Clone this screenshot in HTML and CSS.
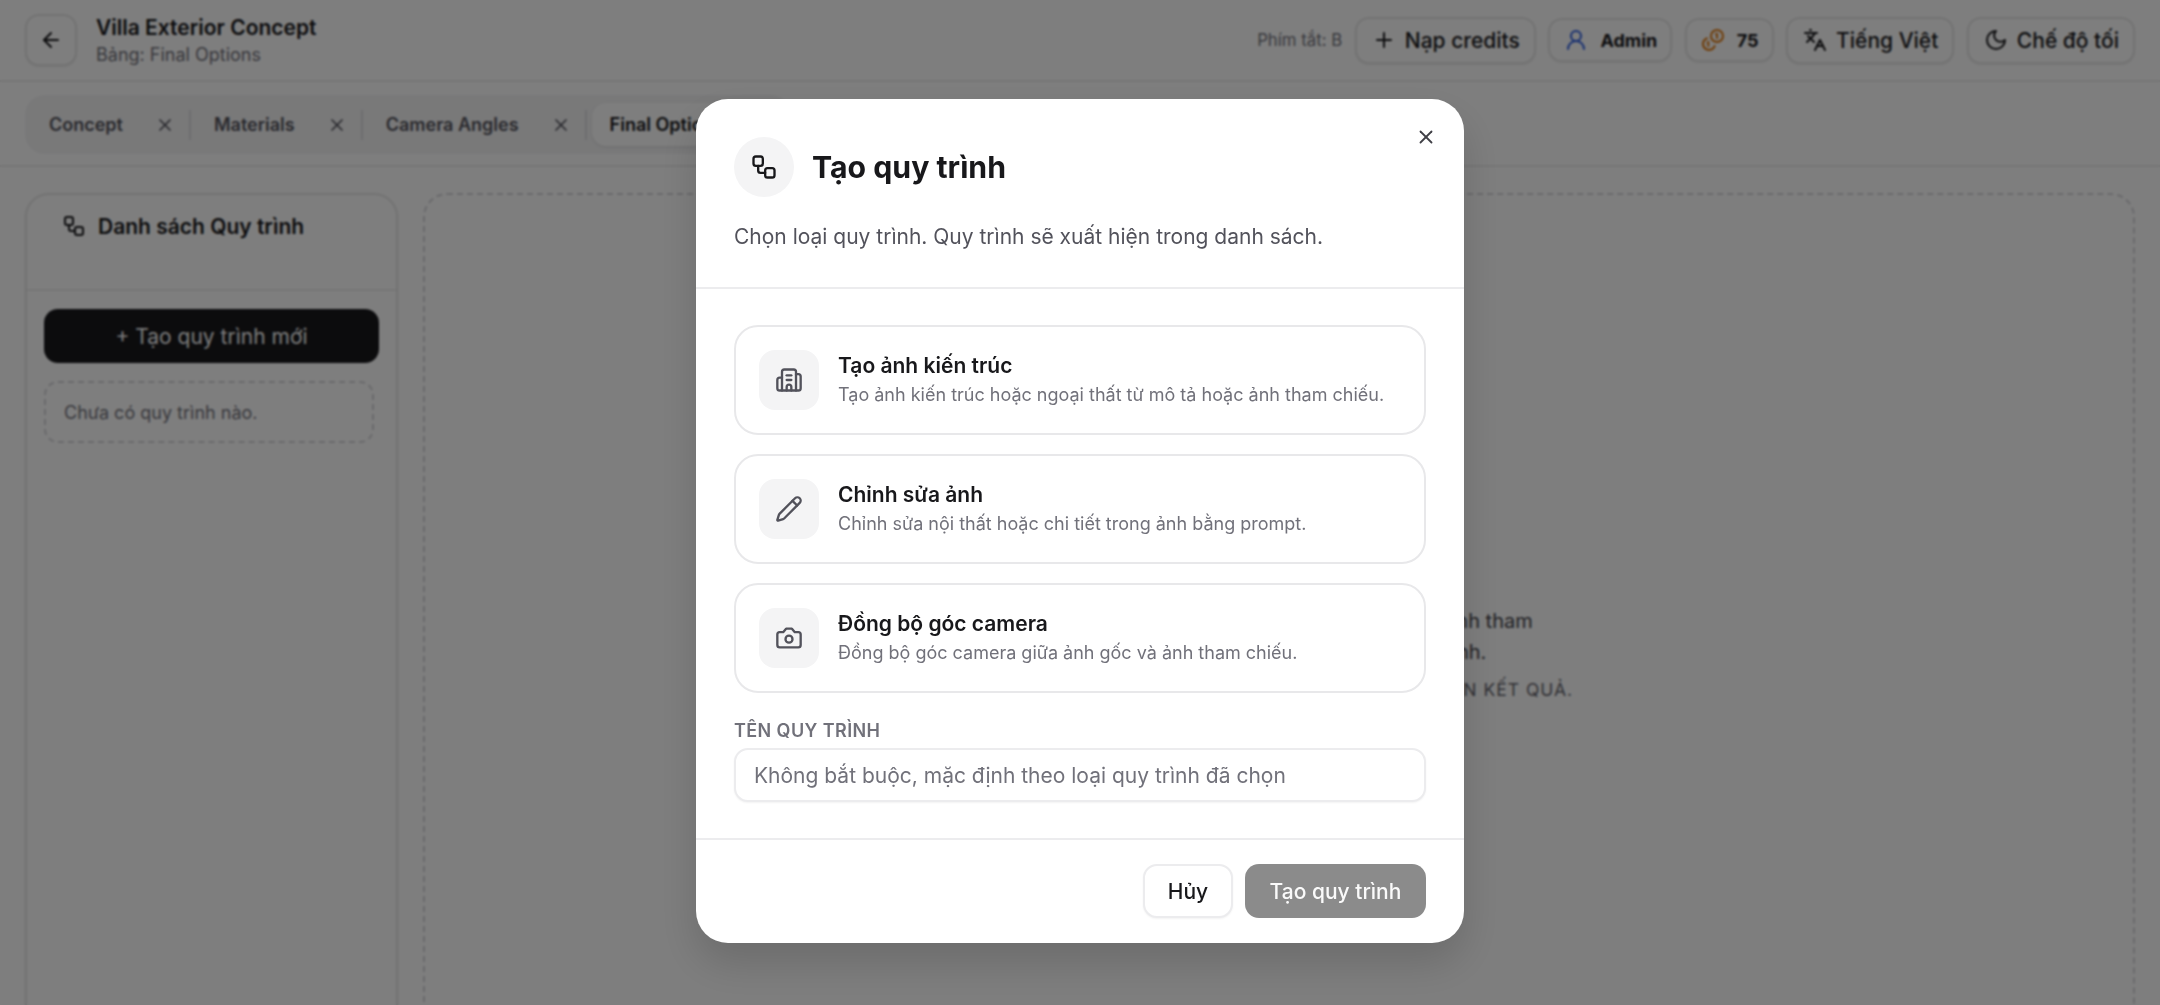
FILE: index.html
```html
<!DOCTYPE html>
<html lang="vi">
  <head>
    <meta charset="UTF-8" />
    <title>Villa Exterior Concept</title>
    <link rel="stylesheet" href="styles.css">
  </head>
  <body>
    <header class="topbar">
      <div class="topbar-left">
        <button class="back-btn">
          <svg class="icon" width="24" height="24" viewBox="0 0 24 24"><path d="m12 19-7-7 7-7"/><path d="M19 12H5"/></svg>
        </button>
        <div>
          <div class="project-name">Villa Exterior Concept</div>
          <div class="project-board">Bảng: Final Options</div>
        </div>
      </div>
      <div class="topbar-right">
        <span class="shortcut">Phím tắt: B</span>
        <button class="top-btn">
          <svg class="icon" width="24" height="24" viewBox="0 0 24 24"><path d="M5 12h14"/><path d="M12 5v14"/></svg>
          Nạp credits
        </button>
        <div class="top-pill">
          <svg class="icon icon-blue" width="24" height="24" viewBox="0 0 24 24"><circle cx="12" cy="8" r="5"/><path d="M20 21a8 8 0 0 0-16 0"/></svg>
          Admin
        </div>
        <div class="top-pill">
          <svg class="icon icon-orange" width="24" height="24" viewBox="0 0 24 24"><circle cx="16" cy="8" r="6"/><path d="M5.91 10.37A6 6 0 1 0 13.66 18"/><path d="M15 6h1v4"/><path d="m6.6 14.6.7-.7v4"/></svg>
          75
        </div>
        <button class="top-btn">
          <svg class="icon" width="24" height="24" viewBox="0 0 24 24"><path d="m5 8 6 6"/><path d="m4 14 6-6 2-3"/><path d="M2 5h12"/><path d="M7 2h1"/><path d="m22 22-5-10-5 10"/><path d="M14 18h6"/></svg>
          Tiếng Việt
        </button>
        <button class="top-btn">
          <svg class="icon" width="24" height="24" viewBox="0 0 24 24"><path d="M12 3a6 6 0 0 0 9 9 9 9 0 1 1-9-9Z"/></svg>
          Chế độ tối
        </button>
      </div>
    </header>

    <div class="tabs-row">
      <div class="tabs">
        <div class="tab">Concept <svg class="icon tab-x" width="20" height="20" viewBox="0 0 24 24"><path d="M18 6 6 18"/><path d="m6 6 12 12"/></svg></div>
        <span class="tab-sep"></span>
        <div class="tab">Materials <svg class="icon tab-x" width="20" height="20" viewBox="0 0 24 24"><path d="M18 6 6 18"/><path d="m6 6 12 12"/></svg></div>
        <span class="tab-sep"></span>
        <div class="tab">Camera Angles <svg class="icon tab-x" width="20" height="20" viewBox="0 0 24 24"><path d="M18 6 6 18"/><path d="m6 6 12 12"/></svg></div>
        <span class="tab-sep"></span>
        <div class="tab tab-active">Final Options <svg class="icon tab-x" width="20" height="20" viewBox="0 0 24 24"><path d="M18 6 6 18"/><path d="m6 6 12 12"/></svg></div>
      </div>
    </div>

    <main class="workspace">
      <aside class="sidebar">
        <div class="sidebar-head">
          <svg class="icon" width="24" height="24" viewBox="0 0 24 24"><rect x="3" y="3" width="8" height="8" rx="2"/><path d="M7 11v4a2 2 0 0 0 2 2h4"/><rect x="13" y="13" width="8" height="8" rx="2"/></svg>
          Danh sách Quy trình
        </div>
        <div class="sidebar-body">
          <button class="new-btn">+ Tạo quy trình mới</button>
          <div class="empty-note">Chưa có quy trình nào.</div>
        </div>
      </aside>
      <section class="canvas">
        <p class="canvas-text">Tạo quy trình mới để sinh ảnh từ mô tả hoặc ảnh tham<br>chiếu, rồi chỉnh sửa và đồng bộ lại hình ảnh.</p>
        <p class="canvas-hint">Chọn quy trình ở danh sách bên trái để nhận kết quả.</p>
      </section>
    </main>

    <div class="overlay">
      <div class="modal">
        <button class="modal-close">
          <svg class="icon" width="22" height="22" viewBox="0 0 24 24"><path d="M18 6 6 18"/><path d="m6 6 12 12"/></svg>
        </button>
        <div class="modal-head">
          <div class="modal-title-row">
            <span class="modal-icon">
              <svg class="icon" width="28" height="28" viewBox="0 0 24 24"><rect x="3" y="3" width="8" height="8" rx="2"/><path d="M7 11v4a2 2 0 0 0 2 2h4"/><rect x="13" y="13" width="8" height="8" rx="2"/></svg>
            </span>
            <h2>Tạo quy trình</h2>
          </div>
          <p class="modal-desc">Chọn loại quy trình. Quy trình sẽ xuất hiện trong danh sách.</p>
        </div>

        <div class="modal-body">
          <div class="option">
            <span class="option-icon">
              <svg class="icon" width="28" height="28" viewBox="0 0 24 24"><path d="M10 12h4"/><path d="M10 8h4"/><path d="M14 21v-3a2 2 0 0 0-4 0v3"/><path d="M6 10H4a2 2 0 0 0-2 2v7a2 2 0 0 0 2 2h16a2 2 0 0 0 2-2V9a2 2 0 0 0-2-2h-2"/><path d="M6 21V5a2 2 0 0 1 2-2h8a2 2 0 0 1 2 2v16"/></svg>
            </span>
            <div>
              <div class="option-title">Tạo ảnh kiến trúc</div>
              <div class="option-sub">Tạo ảnh kiến trúc hoặc ngoại thất từ mô tả hoặc ảnh tham chiếu.</div>
            </div>
          </div>
          <div class="option">
            <span class="option-icon">
              <svg class="icon" width="28" height="28" viewBox="0 0 24 24"><path d="M21.17 6.81a2.82 2.82 0 0 0-3.99-3.99L3.84 16.17a2 2 0 0 0-.5.83l-1.32 4.35a.5.5 0 0 0 .62.62l4.35-1.32a2 2 0 0 0 .83-.5z"/><path d="m15 5 4 4"/></svg>
            </span>
            <div>
              <div class="option-title">Chỉnh sửa ảnh</div>
              <div class="option-sub">Chỉnh sửa nội thất hoặc chi tiết trong ảnh bằng prompt.</div>
            </div>
          </div>
          <div class="option">
            <span class="option-icon">
              <svg class="icon" width="28" height="28" viewBox="0 0 24 24"><path d="M14.5 4h-5L7 7H4a2 2 0 0 0-2 2v9a2 2 0 0 0 2 2h16a2 2 0 0 0 2-2V9a2 2 0 0 0-2-2h-3z"/><circle cx="12" cy="13" r="3"/></svg>
            </span>
            <div>
              <div class="option-title">Đồng bộ góc camera</div>
              <div class="option-sub">Đồng bộ góc camera giữa ảnh gốc và ảnh tham chiếu.</div>
            </div>
          </div>
          <label class="field-label" for="flowName">Tên quy trình</label>
          <input class="field-input" id="flowName" type="text" placeholder="Không bắt buộc, mặc định theo loại quy trình đã chọn" />
        </div>

        <div class="modal-foot">
          <button class="btn-cancel">Hủy</button>
          <button class="btn-create">Tạo quy trình</button>
        </div>
      </div>
    </div>
  </body>
</html>
```

FILE: styles.css
```css
* {
  box-sizing: border-box;
  font-family: Inter, "Noto Sans", sans-serif;
}

html,
body {
  height: 100%;
}

body {
  margin: 0;
  background-color: #fdfdfd;
  color: #18181b;
  overflow: hidden;
  display: flex;
  flex-direction: column;
}

button {
  cursor: pointer;
}

.icon {
  fill: none;
  stroke: currentColor;
  stroke-width: 2;
  stroke-linecap: round;
  stroke-linejoin: round;
  flex-shrink: 0;
}

.icon-blue {
  color: #2f5fe0;
}

.icon-orange {
  color: #e07a10;
}

/* top bar */
.topbar {
  height: 82px;
  flex-shrink: 0;
  padding: 0 25px;
  display: flex;
  justify-content: space-between;
  align-items: center;
  border-bottom: 2px solid #ececec;
}

.topbar-left {
  display: flex;
  align-items: center;
  gap: 19px;
}

.back-btn {
  width: 52px;
  height: 52px;
  display: flex;
  justify-content: center;
  align-items: center;
  color: #18181b;
  background: #fdfdfd;
  border: 2px solid #e6e6e6;
  border-radius: 14px;
  box-shadow: 0 1px 2px rgba(0, 0, 0, 0.08);
}

.project-name {
  font-size: 21px;
  font-weight: 600;
  line-height: 29px;
}

.project-board {
  font-size: 18px;
  line-height: 25px;
  color: #71717a;
}

.topbar-right {
  display: flex;
  align-items: center;
  gap: 12.5px;
}

.shortcut {
  font-size: 16.8px;
  color: #71717a;
}

.top-btn {
  height: 47px;
  padding: 0 14px 0 15px;
  display: flex;
  align-items: center;
  gap: 9px;
  font-size: 21px;
  font-weight: 500;
  color: #18181b;
  background: #fdfdfd;
  border: 2px solid #e6e6e6;
  border-radius: 14px;
  box-shadow: 0 1px 2px rgba(0, 0, 0, 0.08);
}

.top-pill {
  height: 44px;
  padding: 0 13px 0 14px;
  display: flex;
  align-items: center;
  gap: 12px;
  font-size: 18px;
  font-weight: 700;
  border: 2px solid #e6e6e6;
  border-radius: 14px;
  box-shadow: 0 1px 2px rgba(0, 0, 0, 0.08);
}

/* tabs */
.tabs-row {
  height: 85px;
  flex-shrink: 0;
  padding: 13px 25px 0;
  border-bottom: 2px solid #ececec;
}

.tabs {
  width: fit-content;
  height: 59px;
  padding: 0 6px;
  display: flex;
  align-items: center;
  background: #f2f2f3;
  border-radius: 20px;
}

.tab {
  height: 43px;
  padding: 0 9px 0 18px;
  display: flex;
  align-items: center;
  gap: 32px;
  font-size: 18px;
  font-weight: 600;
  color: #52525b;
  border-radius: 14px;
}

.tab-active {
  color: #18181b;
  background: #fdfdfd;
  box-shadow: 0 1px 3px rgba(0, 0, 0, 0.1);
}

.tab-sep {
  width: 2px;
  height: 30px;
  margin: 0 5px;
  background: #dcdcde;
}

/* workspace */
.workspace {
  flex: 1;
  min-height: 0;
  padding: 26px 25px 0;
  display: flex;
  gap: 25px;
}

.sidebar {
  width: 373px;
  flex-shrink: 0;
  background: #fdfdfd;
  border: 2px solid #e6e6e6;
  border-bottom: none;
  border-radius: 24px 24px 0 0;
  box-shadow: 0 1px 3px rgba(0, 0, 0, 0.08);
}

.sidebar-head {
  height: 96px;
  padding: 19px 0 0 35px;
  display: flex;
  align-items: flex-start;
  gap: 12px;
  font-size: 21px;
  font-weight: 600;
  line-height: 26px;
  border-bottom: 2px solid #ececec;
}

.sidebar-body {
  padding: 18px 17px 0 17px;
}

.new-btn {
  width: 100%;
  height: 54px;
  font-size: 21px;
  font-weight: 400;
  color: #fafafa;
  background: #18181b;
  border: none;
  border-radius: 14px;
}

.empty-note {
  width: 330px;
  height: 62px;
  margin-top: 18px;
  padding: 0 18px;
  display: flex;
  align-items: center;
  font-size: 18px;
  color: #71717a;
  border: 2px dashed #d4d4d8;
  border-radius: 14px;
}

.canvas {
  flex: 1;
  display: flex;
  flex-direction: column;
  align-items: center;
  padding-top: 411px;
  border: 2px dashed #d4d4d8;
  border-bottom: none;
  border-radius: 24px 24px 0 0;
  text-align: center;
}

.canvas-text {
  margin: 0;
  font-size: 20px;
  line-height: 31px;
  color: #3f3f46;
}

.canvas-hint {
  margin: 11px 0 0;
  font-size: 17.5px;
  letter-spacing: 1px;
  text-transform: uppercase;
  color: #5f5f68;
}

/* modal */
.overlay {
  position: fixed;
  top: 0;
  right: 0;
  bottom: 0;
  left: 0;
  padding-top: 99px;
  display: flex;
  justify-content: center;
  align-items: flex-start;
  background: rgba(0, 0, 0, 0.5);
  backdrop-filter: blur(1px);
}

.modal {
  position: relative;
  width: 768px;
  height: 844px;
  display: flex;
  flex-direction: column;
  background: white;
  border-radius: 32px;
  box-shadow: 0 20px 40px rgba(0, 0, 0, 0.15);
}

.modal-close {
  position: absolute;
  top: 27px;
  right: 27px;
  width: 22px;
  height: 22px;
  padding: 0;
  color: #3f3f46;
  background: none;
  border: none;
}

.modal-head {
  height: 190px;
  flex-shrink: 0;
  padding: 38px 38px 0;
  border-bottom: 2px solid #ececee;
}

.modal-title-row {
  display: flex;
  align-items: center;
  gap: 18px;
}

.modal-icon {
  width: 60px;
  height: 60px;
  display: flex;
  justify-content: center;
  align-items: center;
  background: #f4f4f5;
  border-radius: 50%;
}

h2 {
  margin: 0;
  font-size: 30.25px;
  font-weight: 700;
}

.modal-desc {
  margin: 26px 0 0;
  font-size: 21px;
  line-height: 28px;
  color: #52525b;
}

.modal-body {
  flex: 1;
  padding: 36px 38px 0;
  display: flex;
  flex-direction: column;
  gap: 19px;
}

.option {
  height: 110px;
  padding: 0 23px;
  display: flex;
  align-items: center;
  gap: 19px;
  border: 2px solid #e8e8ea;
  border-radius: 24px;
}

.option-icon {
  width: 60px;
  height: 60px;
  flex-shrink: 0;
  display: flex;
  justify-content: center;
  align-items: center;
  color: #52525b;
  background: #f4f4f5;
  border-radius: 16px;
}

.option-title {
  font-size: 21px;
  font-weight: 600;
  line-height: 28px;
}

.option-sub {
  margin-top: 2px;
  font-size: 18px;
  line-height: 26px;
  color: #71717a;
}

.field-label {
  margin-top: 7px;
  margin-bottom: -14px;
  font-size: 18px;
  font-weight: 600;
  letter-spacing: 0.4px;
  line-height: 24px;
  text-transform: uppercase;
  color: #71717a;
}

.field-input {
  width: 100%;
  height: 54px;
  padding: 0 18px;
  font-size: 21px;
  border: 2px solid #ececee;
  border-radius: 14px;
  box-shadow: 0 1px 2px rgba(0, 0, 0, 0.05);
}

.field-input::placeholder {
  color: #71717a;
}

.modal-foot {
  height: 105px;
  flex-shrink: 0;
  padding: 24px 38px 0;
  display: flex;
  justify-content: flex-end;
  gap: 12px;
  border-top: 2px solid #ececee;
}

.btn-cancel,
.btn-create {
  height: 54px;
  font-size: 21px;
  font-weight: 500;
  border-radius: 14px;
}

.btn-cancel {
  width: 90px;
  color: #18181b;
  background: white;
  border: 2px solid #ececee;
  box-shadow: 0 1px 2px rgba(0, 0, 0, 0.05);
}

.btn-create {
  width: 181px;
  color: #fafafa;
  background: #8b8b8b;
  border: none;
}
```
